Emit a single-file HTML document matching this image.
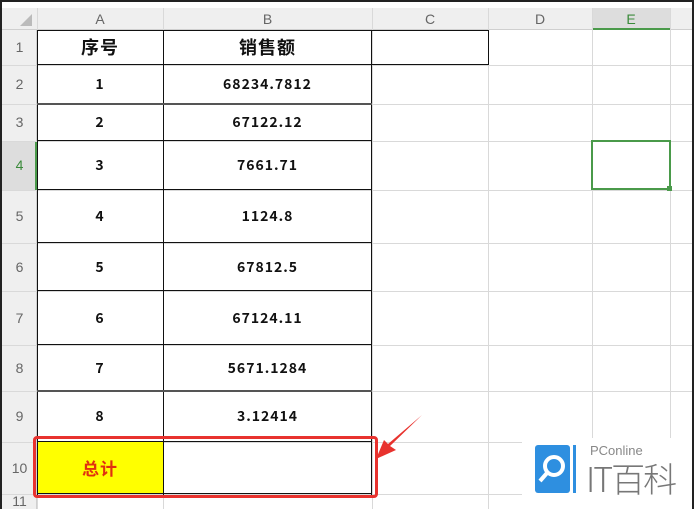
<!DOCTYPE html>
<html><head><meta charset="utf-8"><style>
body{margin:0;width:694px;height:509px;overflow:hidden;background:#fff;position:relative;font-family:"Liberation Sans","Noto Sans CJK SC",sans-serif}
div{position:absolute;box-sizing:border-box;white-space:nowrap}
.vl{width:1px;background:#d9d9d9;top:8px;height:501px}
.hl{height:1px;background:#d9d9d9;left:2px;width:690px}
.ch{top:8px;height:22px;color:#666;font-size:14px;text-align:center;line-height:22px}
.rh{left:2px;width:35px;color:#666;font-size:14px;text-align:center}
.c{font-weight:bold;font-size:14px;text-align:center;color:#111;font-family:"Noto Sans CJK SC",sans-serif;letter-spacing:1px}
.bk{background:#111}
</style></head><body>
<div style="left:0;top:0;width:694px;height:509px;border:2px solid #222;border-bottom:none"></div>
<div style="left:2px;top:8px;width:690px;height:22px;background:#efefef;border-bottom:1px solid #cfcfcf"></div>
<div style="left:2px;top:30px;width:35px;height:479px;background:#efefef;border-right:1px solid #cfcfcf"></div>
<div style="left:592px;top:8px;width:78px;height:22px;background:#ddd;border-bottom:2px solid #4a9a4a"></div>
<div style="left:2px;top:141px;width:35px;height:49px;background:#ddd;border-right:2px solid #4a9a4a"></div>
<div style="left:20px;top:14px;width:0;height:0;border-left:12px solid transparent;border-bottom:12px solid #bbb"></div>
<div class="ch" style="left:37px;width:126px">A</div>
<div class="ch" style="left:163px;width:209px">B</div>
<div class="ch" style="left:372px;width:116px">C</div>
<div class="ch" style="left:488px;width:104px">D</div>
<div class="ch" style="left:592px;width:78px;color:#3a8a3a">E</div>
<div class="vl" style="left:37px"></div><div class="vl" style="left:163px"></div><div class="vl" style="left:372px"></div>
<div class="vl" style="left:488px"></div><div class="vl" style="left:592px"></div><div class="vl" style="left:670px"></div>
<div class="hl" style="top:65px"></div><div class="hl" style="top:104px"></div><div class="hl" style="top:141px"></div>
<div class="hl" style="top:190px"></div><div class="hl" style="top:243px"></div><div class="hl" style="top:291px"></div>
<div class="hl" style="top:345px"></div><div class="hl" style="top:391px"></div><div class="hl" style="top:442px"></div>
<div class="hl" style="top:494px"></div>
<div class="rh" style="top:30px;height:35px;line-height:35px">1</div>
<div class="rh" style="top:65px;height:39px;line-height:39px">2</div>
<div class="rh" style="top:104px;height:37px;line-height:37px">3</div>
<div class="rh" style="top:141px;height:49px;line-height:49px;color:#3a8a3a">4</div>
<div class="rh" style="top:190px;height:53px;line-height:53px">5</div>
<div class="rh" style="top:243px;height:48px;line-height:48px">6</div>
<div class="rh" style="top:291px;height:54px;line-height:54px">7</div>
<div class="rh" style="top:345px;height:46px;line-height:46px">8</div>
<div class="rh" style="top:391px;height:51px;line-height:51px">9</div>
<div class="rh" style="top:442px;height:52px;line-height:52px">10</div>
<div class="rh" style="top:494px;height:15px;line-height:15px">11</div>
<div style="left:37px;top:442px;width:126px;height:52px;background:#ffff00"></div>
<div class="bk" style="left:37px;top:30px;width:1px;height:465px"></div>
<div class="bk" style="left:163px;top:30px;width:1px;height:465px"></div>
<div class="bk" style="left:371px;top:30px;width:1px;height:465px"></div>
<div class="bk" style="left:488px;top:30px;width:1px;height:35px"></div>
<div class="bk" style="left:37px;top:30px;width:452px;height:1px"></div>
<div class="bk" style="left:37px;top:64px;width:452px;height:1px"></div>
<div class="bk" style="left:37px;top:103px;width:335px;height:2px;background:#555"></div>
<div class="bk" style="left:37px;top:140px;width:335px;height:1px"></div>
<div class="bk" style="left:37px;top:189px;width:335px;height:1px"></div>
<div class="bk" style="left:37px;top:242px;width:335px;height:1px"></div>
<div class="bk" style="left:37px;top:290px;width:335px;height:1px"></div>
<div class="bk" style="left:37px;top:344px;width:335px;height:1px"></div>
<div class="bk" style="left:37px;top:390px;width:335px;height:2px;background:#555"></div>
<div class="bk" style="left:37px;top:441px;width:335px;height:1px"></div>
<div class="bk" style="left:37px;top:493px;width:335px;height:1px"></div>
<div class="c" style="left:37px;top:30px;width:126px;height:35px;line-height:35px;font-size:18px">序号</div>
<div class="c" style="left:163px;top:30px;width:209px;height:35px;line-height:35px;font-size:18px">销售额</div>
<div class="c" style="left:37px;top:65px;width:126px;height:39px;line-height:39px">1</div>
<div class="c" style="left:163px;top:65px;width:209px;height:39px;line-height:39px">68234.7812</div>
<div class="c" style="left:37px;top:104px;width:126px;height:37px;line-height:37px">2</div>
<div class="c" style="left:163px;top:104px;width:209px;height:37px;line-height:37px">67122.12</div>
<div class="c" style="left:37px;top:141px;width:126px;height:49px;line-height:49px">3</div>
<div class="c" style="left:163px;top:141px;width:209px;height:49px;line-height:49px">7661.71</div>
<div class="c" style="left:37px;top:190px;width:126px;height:53px;line-height:53px">4</div>
<div class="c" style="left:163px;top:190px;width:209px;height:53px;line-height:53px">1124.8</div>
<div class="c" style="left:37px;top:243px;width:126px;height:48px;line-height:48px">5</div>
<div class="c" style="left:163px;top:243px;width:209px;height:48px;line-height:48px">67812.5</div>
<div class="c" style="left:37px;top:291px;width:126px;height:54px;line-height:54px">6</div>
<div class="c" style="left:163px;top:291px;width:209px;height:54px;line-height:54px">67124.11</div>
<div class="c" style="left:37px;top:345px;width:126px;height:46px;line-height:46px">7</div>
<div class="c" style="left:163px;top:345px;width:209px;height:46px;line-height:46px">5671.1284</div>
<div class="c" style="left:37px;top:391px;width:126px;height:51px;line-height:51px">8</div>
<div class="c" style="left:163px;top:391px;width:209px;height:51px;line-height:51px">3.12414</div>
<div class="c" style="left:37px;top:442px;width:126px;height:52px;line-height:52px;color:#e03010;font-size:17px">总计</div>
<div style="left:591px;top:140px;width:80px;height:50px;border:2px solid #4a9a4a"></div>
<div style="left:667px;top:186px;width:5px;height:5px;background:#4a9a4a"></div>
<div style="left:33px;top:436px;width:345px;height:62px;border:3px solid #e8322e;border-radius:4px"></div>
<svg style="position:absolute;left:370px;top:410px" width="60" height="55"><path d="M52 5 L20 36 L26 40 L6 49 L14 30 L18 34 Z" fill="#e8322e"/></svg>
<div style="left:522px;top:438px;width:170px;height:71px;background:#fff"></div>
<div style="left:535px;top:445px;width:35px;height:48px;background:#2e8fe0;border-radius:3px"></div>
<div style="left:573px;top:445px;width:3px;height:48px;background:#2e8fe0"></div>
<svg style="position:absolute;left:535px;top:445px" width="35" height="48"><circle cx="19" cy="21" r="9" fill="none" stroke="#fff" stroke-width="4"/><path d="M12 28 L5 36" stroke="#fff" stroke-width="4"/></svg>
<div style="left:590px;top:444px;font-size:13px;line-height:14px;color:#888;font-family:'Liberation Sans',sans-serif">PConline</div>
<div style="left:586px;top:456px;font-size:34px;color:#777;font-family:'Noto Sans CJK SC',sans-serif;font-weight:300;letter-spacing:-2px;line-height:44px">IT百科</div>
</body></html>
